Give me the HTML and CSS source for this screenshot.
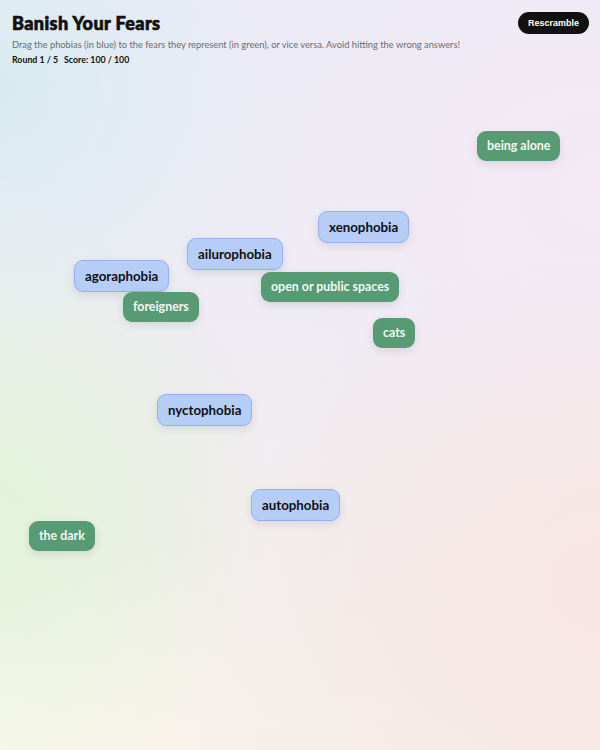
FILE: index.html
```html
<!DOCTYPE html>
<html lang="en">
<head>
<meta charset="utf-8">
<title>Banish Your Fears</title>
<link rel="stylesheet" href="styles.css">
</head>
<body>
<div class="page">
  <header class="top">
    <div class="intro">
      <h1 class="title">Banish Your Fears</h1>
      <p class="desc">Drag the phobias (in blue) to the fears they represent (in green), or vice versa. Avoid hitting the wrong answers!</p>
      <div class="stats"><span>Round 1 / 5</span><span>Score: 100 / 100</span></div>
    </div>
    <button class="rescramble" type="button">Rescramble</button>
  </header>
  <main class="board">
    <div class="chip fear" style="left:477px; top:131px">being alone</div>
    <div class="chip phobia" style="left:318px; top:211px">xenophobia</div>
    <div class="chip phobia" style="left:187px; top:238px">ailurophobia</div>
    <div class="chip phobia" style="left:74px; top:260px">agoraphobia</div>
    <div class="chip fear" style="left:261px; top:272px">open or public spaces</div>
    <div class="chip fear" style="left:123px; top:292px">foreigners</div>
    <div class="chip fear" style="left:373px; top:318px">cats</div>
    <div class="chip phobia" style="left:157px; top:394px">nyctophobia</div>
    <div class="chip phobia" style="left:251px; top:489px">autophobia</div>
    <div class="chip fear" style="left:29px; top:521px">the dark</div>
  </main>
</div>
</body>
</html>
```
FILE: styles.css
```css
* { box-sizing: border-box; }
html, body { margin: 0; height: 100%; }
body {
  font-family: "Lato", "Open Sans", sans-serif;
  color: #111;
  background:
    radial-gradient(ellipse 45% 35% at 0% 12%, rgba(210,236,240,0.75), rgba(210,236,240,0) 100%),
    radial-gradient(ellipse 45% 40% at 0% 68%, rgba(224,244,214,0.9), rgba(224,244,214,0) 100%),
    radial-gradient(ellipse 45% 35% at 0% 100%, rgba(250,248,236,1), rgba(250,248,236,0) 100%),
    radial-gradient(ellipse 60% 45% at 100% 78%, rgba(248,228,226,0.9), rgba(248,228,226,0) 100%),
    radial-gradient(ellipse 55% 40% at 100% 25%, rgba(246,233,246,0.85), rgba(246,233,246,0) 100%),
    linear-gradient(180deg, #ecebf6 0%, #efecf3 45%, #f6efe9 100%);
}
.page { position: relative; height: 100%; overflow: hidden; }
.top {
  display: flex;
  justify-content: space-between;
  align-items: flex-start;
  padding: 11px 11px 0 12px;
}
.title {
  margin: 0;
  font-weight: 900;
  font-size: 18px;
  line-height: 24px;
  letter-spacing: 0.4px;
  -webkit-text-stroke: 0.7px #111;
}
.desc {
  margin: 4px 0 0;
  font-size: 9.3px;
  line-height: 12px;
  color: #6b6b70;
}
.stats {
  margin-top: 3px;
  display: flex;
  gap: 6px;
  font-size: 8.8px;
  line-height: 12px;
  font-weight: 700;
  color: #111;
}
.rescramble {
  margin-top: 1px;
  height: 22px;
  padding: 0 10px;
  border: none;
  border-radius: 11px;
  background: #111;
  color: #fff;
  font-family: "Liberation Sans", Arial, sans-serif;
  font-weight: 700;
  font-size: 9px;
  cursor: pointer;
}
.board { position: absolute; inset: 0; }
.chip {
  position: absolute;
  white-space: nowrap;
  font-weight: 700;
  line-height: 16px;
  border-radius: 9px;
  box-shadow: 0 3px 8px rgba(60,70,90,0.14);
}
.phobia {
  padding: 7px 10px;
  font-size: 13.3px;
  background: #b6cdf8;
  border: 1px solid #92b1ee;
  color: #111;
}
.fear {
  padding: 7px 10px;
  font-size: 12.4px;
  background: #569b74;
  color: #f2f7f2;
}
```
